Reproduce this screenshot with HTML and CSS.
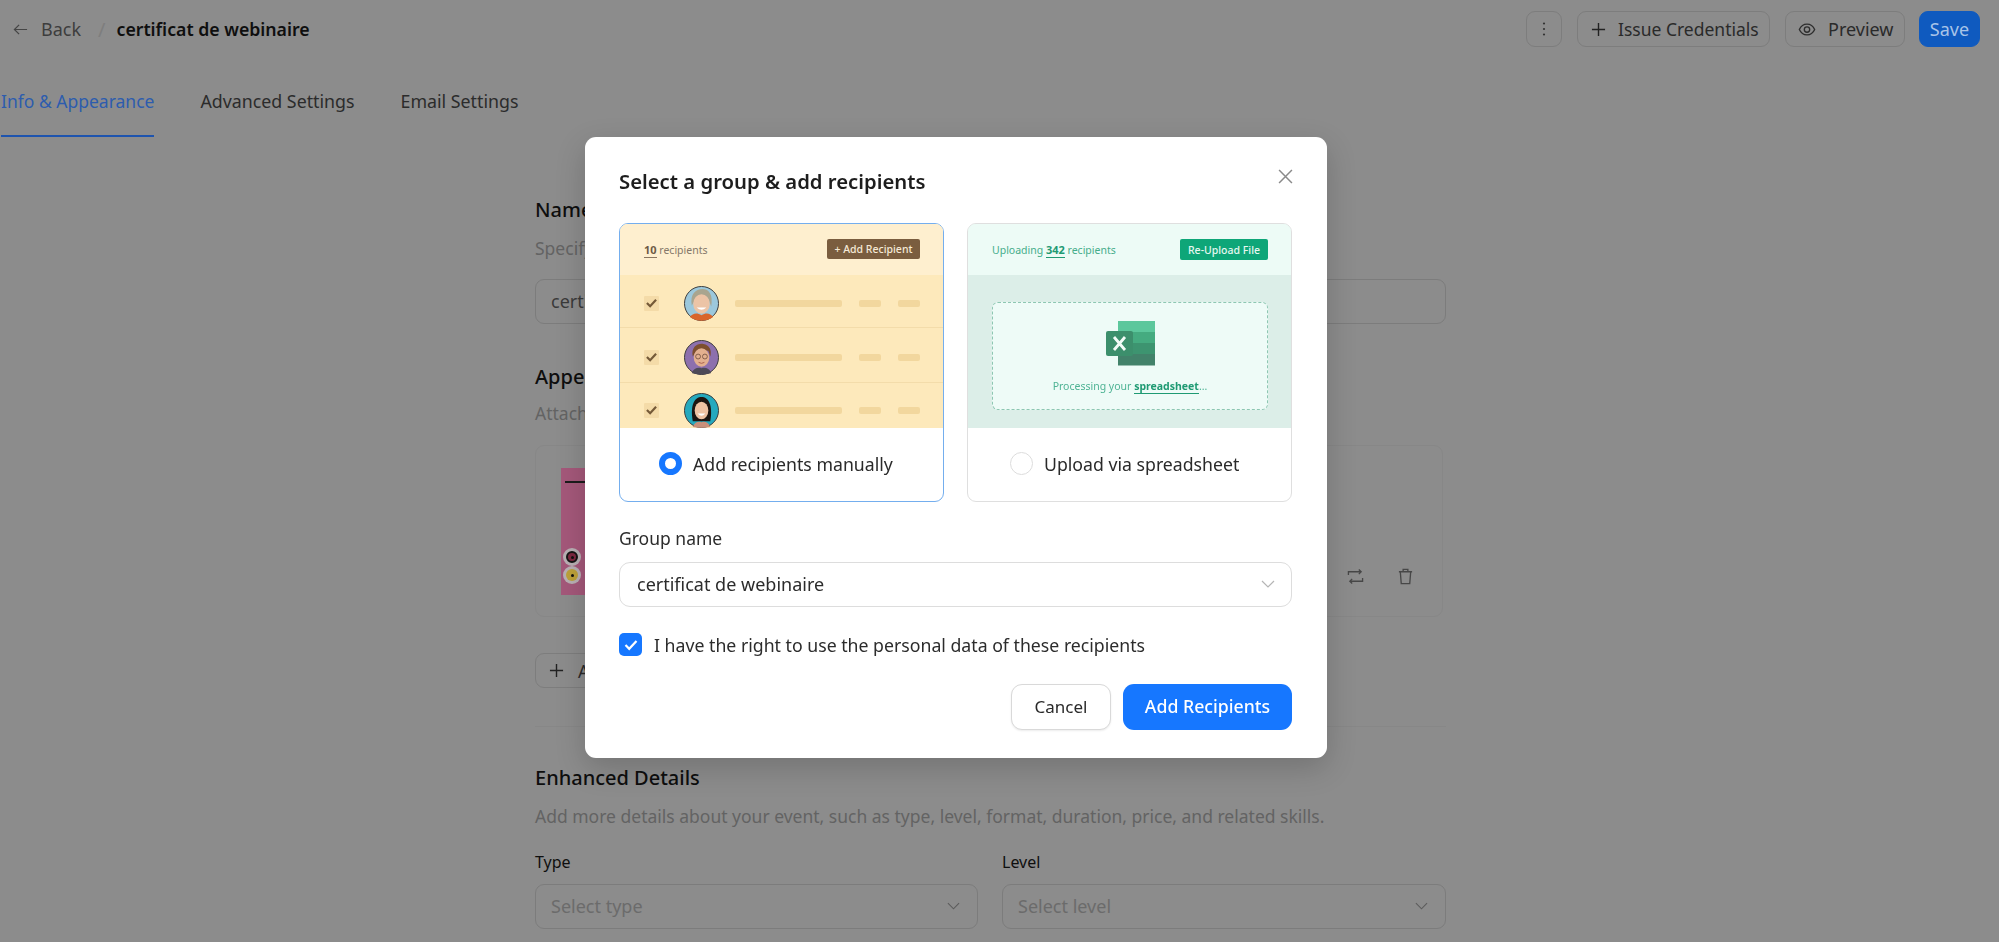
FILE: index.html
```html
<!DOCTYPE html>
<html lang="en">
<head>
<meta charset="utf-8">
<title>certificat de webinaire</title>
<link rel="stylesheet" href="styles.css">
</head>
<body>
<div class="page">
  <header class="topbar">
    <div class="crumbs">
      <svg class="ic-back" viewBox="0 0 16 16"><path d="M15 8H1.500M6.500 3 1.500 8 6.500 13"/></svg>
      <span class="back">Back</span>
      <span class="slash">/</span>
      <span class="doc-title">certificat de webinaire</span>
    </div>
    <div class="actions">
      <button class="btn btn-icon"><svg viewBox="0 0 16 16"><circle cx="8" cy="2.500" r="1.100"/><circle cx="8" cy="8" r="1.100"/><circle cx="8" cy="13.500" r="1.100"/></svg></button>
      <button class="btn btn-issue"><svg class="ic-plus" viewBox="0 0 16 16"><path d="M8 1v14M1 8h14"/></svg>Issue Credentials</button>
      <button class="btn btn-preview"><svg class="ic-eye" viewBox="0 0 20 16"><path d="M1.500 8C3.500 3.500 6.500 2 10 2S16.500 3.500 18.500 8C16.500 12.500 13.500 14 10 14S3.500 12.500 1.500 8Z"/><circle cx="10" cy="8" r="3"/></svg>Preview</button>
      <button class="btn btn-save">Save</button>
    </div>
  </header>
  <nav class="tabs">
    <span class="tab tab-on">Info &amp; Appearance</span>
    <span class="tab">Advanced Settings</span>
    <span class="tab">Email Settings</span>
  </nav>
  <main class="content">
    <h2 class="h">Name</h2>
    <p class="sub sub-a">Specify the name of your group</p>
    <div class="field field-name">certificat de webinaire</div>
    <h2 class="h h-appear">Appearance</h2>
    <p class="sub sub-b">Attach a design to your credentials</p>
    <div class="design">
      <div class="thumb">
        <span class="thumb-line"></span>
        <span class="seal seal-a"><i></i></span>
        <span class="seal seal-b"><i></i></span>
      </div>
      <div class="design-tools">
        <svg viewBox="0 0 18 18"><path d="M1.500 7.500V4H15M12.500 1.500 15 4 12.500 6.500M16.500 10.500V14H3M5.500 11.500 3 14 5.500 16.500"/></svg>
        <svg viewBox="0 0 18 18"><path d="M2 4H16M6.500 4V1.500H11.500V4M3.500 4 4.500 16.500H13.500L14.500 4"/></svg>
      </div>
    </div>
    <button class="btn btn-add"><svg class="ic-plus" viewBox="0 0 16 16"><path d="M8 1v14M1 8h14"/></svg>Add design</button>
    <hr class="rule">
    <h2 class="h h-enh">Enhanced Details</h2>
    <p class="sub sub-a">Add more details about your event, such as type, level, format, duration, price, and related skills.</p>
    <div class="grid2">
      <div>
        <label class="lbl">Type</label>
        <div class="field select">Select type<svg class="chev" viewBox="0 0 14 8"><path d="M1 1 7 7 13 1"/></svg></div>
      </div>
      <div>
        <label class="lbl">Level</label>
        <div class="field select">Select level<svg class="chev" viewBox="0 0 14 8"><path d="M1 1 7 7 13 1"/></svg></div>
      </div>
    </div>
  </main>
</div>

<section class="modal">
  <svg class="close" viewBox="0 0 14 14"><path d="M1 1 13 13M13 1 1 13"/></svg>
  <h1 class="m-title">Select a group &amp; add recipients</h1>
  <div class="cards">
    <article class="card card-on">
      <div class="art art-y">
        <div class="y-head">
          <span class="y-count"><b>10</b> recipients</span>
          <span class="y-btn">+ Add Recipient</span>
        </div>
        <div class="y-row y-row-1">
          <span class="y-check"><svg viewBox="0 0 12 10"><path d="M1 5 4.500 8.500 11 1.500"/></svg></span>
          <svg class="avatar" viewBox="0 0 36 36"><circle cx="18" cy="18" r="17.500" fill="#9cc8dc" stroke="#3a3a3a"/><path d="M8 20C6 8 12 3 19 3S30 9 28 21L25 13H12Z" fill="#a9a58f"/><ellipse cx="18" cy="18.500" rx="8.500" ry="10" fill="#ecc4a6"/><path d="M13 22Q18 27 23 22Z" fill="#fff"/><path d="M6 32C9 28 13 27 18 30 23 27 27 28 30 32 24 37 12 37 6 32Z" fill="#d9652b"/></svg>
          <span class="bar bar-l"></span><span class="bar bar-s"></span><span class="bar bar-s"></span>
        </div>
        <div class="y-row y-row-2">
          <span class="y-check"><svg viewBox="0 0 12 10"><path d="M1 5 4.500 8.500 11 1.500"/></svg></span>
          <svg class="avatar" viewBox="0 0 36 36"><circle cx="18" cy="18" r="17.500" fill="#8d70ad" stroke="#3a3a3a"/><path d="M9 17C7 7 14 3 20 4S29 10 27 17L25 11H13Z" fill="#7d4f2e"/><ellipse cx="18" cy="18" rx="8" ry="9.500" fill="#e3b08f"/><circle cx="14.500" cy="17" r="2.500" fill="none" stroke="#6a4a3a" stroke-width=".8"/><circle cx="21.500" cy="17" r="2.500" fill="none" stroke="#6a4a3a" stroke-width=".8"/><path d="M15 23Q18 25 21 23" fill="none" stroke="#a8614d"/><path d="M8 34C10 29 14 28 18 29 22 28 26 29 28 34 22 36 14 36 8 34Z" fill="#4d4a57"/></svg>
          <span class="bar bar-l"></span><span class="bar bar-s"></span><span class="bar bar-s"></span>
        </div>
        <div class="y-row y-row-3">
          <span class="y-check"><svg viewBox="0 0 12 10"><path d="M1 5 4.500 8.500 11 1.500"/></svg></span>
          <svg class="avatar" viewBox="0 0 36 36"><circle cx="18" cy="18" r="17.500" fill="#25a9be" stroke="#3a3a3a"/><path d="M9 29C6 12 11 4 18 4S30 12 27 29Z" fill="#1c1512"/><ellipse cx="18" cy="18" rx="7" ry="9" fill="#eec2a3"/><path d="M14 21Q18 26 22 21Z" fill="#fff"/><path d="M9 35C11 30 14 29 18 30 22 29 25 30 27 35 22 36 14 36 9 35Z" fill="#c98f7a"/></svg>
          <span class="bar bar-l"></span><span class="bar bar-s"></span><span class="bar bar-s"></span>
        </div>
      </div>
      <div class="choice choice-y"><span class="radio radio-on"></span><span>Add recipients manually</span></div>
    </article>
    <article class="card">
      <div class="art art-g">
        <div class="g-head">
          <span class="g-count">Uploading <b>342</b> recipients</span>
          <span class="g-btn">Re-Upload File</span>
        </div>
        <div class="g-body">
          <div class="drop">
            <svg class="excel" viewBox="0 0 49 46">
              <rect x="12" y="1" width="37" height="11.500" fill="#5cc79c"/>
              <rect x="12" y="12" width="37" height="11.500" fill="#45ab80"/>
              <rect x="12" y="23" width="37" height="11.500" fill="#3d9470"/>
              <rect x="12" y="34" width="37" height="11.500" fill="#42826a"/>
              <rect x="0" y="11" width="27" height="25" rx="2" fill="#3c8f6c"/>
              <path d="M8 17 19 30M19 17 8 30" stroke="#f2fbf7" stroke-width="2.800"/>
            </svg>
            <span class="drop-text">Processing your <b>spreadsheet</b>...</span>
          </div>
        </div>
      </div>
      <div class="choice choice-g"><span class="radio"></span><span>Upload via spreadsheet</span></div>
    </article>
  </div>
  <label class="m-lbl">Group name</label>
  <div class="m-select">certificat de webinaire<svg class="m-chev" viewBox="0 0 14 8"><path d="M1 1 7 7 13 1"/></svg></div>
  <div class="consent">
    <span class="cb"><svg viewBox="0 0 14 12"><path d="M1.500 6 5.200 9.800 12.500 2"/></svg></span>
    <span>I have the right to use the personal data of these recipients</span>
  </div>
  <div class="m-foot">
    <button class="m-btn m-cancel">Cancel</button>
    <button class="m-btn m-ok">Add Recipients</button>
  </div>
</section>
</body>
</html>
```
FILE: styles.css
```css
* { box-sizing: border-box; }
html, body { margin: 0; height: 942px; overflow: hidden; }
body { background: #8c8c8c; font-family: "Noto Sans", sans-serif; color: #262626; font-size: 17.800px; }
.page { height: 942px; overflow: hidden; }
button { font: inherit; }

.topbar { display: flex; justify-content: space-between; padding: 11px 19px 0 13px; height: 58px; }
.crumbs { display: flex; align-items: center; height: 36px; }
.ic-back { width: 15px; height: 15px; fill: none; stroke: #454545; stroke-width: 1.300; margin-right: 13px; }
.back { color: #3d3d3d; font-size: 18px; }
.slash { color: #7e7e7e; font-size: 20px; margin: 0 11px 0 17px; }
.doc-title { color: #0f0f0f; font-size: 17.700px; font-weight: 600; }
.actions { display: flex; gap: 15px; }
.btn { display: inline-flex; align-items: center; height: 36px; background: transparent; border: 1.500px solid #7d7d7d; border-radius: 9px; color: #2a2a2a; font-size: 17.500px; padding: 0; }
.btn-icon { width: 36px; justify-content: center; }
.btn-icon svg { width: 16px; height: 16px; fill: #333; }
.btn-issue { width: 193px; padding-left: 13px; }
.btn-issue .ic-plus { margin-right: 12px; }
.btn-preview { width: 120px; padding-left: 12px; font-size: 18px; }
.btn-save { width: 61px; justify-content: center; background: #0f5abf; border-color: #0f5abf; color: #a8c4e8; margin-left: -1px; font-size: 18px; }
.ic-plus { width: 15px; height: 15px; fill: none; stroke: #222; stroke-width: 1.500; margin-right: 14px; }
.ic-eye { width: 18px; height: 15px; fill: none; stroke: #2e2e2e; stroke-width: 1.500; margin-right: 12px; }

.tabs { display: flex; gap: 46px; margin-top: 31px; padding-left: 1px; }
.tab { font-size: 17.800px; line-height: 24px; padding-bottom: 22px; color: #2b2b2b; border-bottom: 2px solid transparent; height: 48px; }
.tab-on { color: #2d5cae; border-bottom-color: #1e54ae; font-size: 17.500px; }

.content { margin: 59px 0 0 535px; width: 911px; }
.h { margin: 0; font-size: 20px; line-height: 28px; font-weight: 500; color: #0e0e0e; }
.sub { margin: 0; font-size: 17.500px; line-height: 24px; color: #636363; }
.sub-a { margin-top: 12px; }
.sub-b { margin-top: 10px; }
.field { height: 45px; border: 1.500px solid #7c7c7c; border-radius: 9px; display: flex; align-items: center; padding: 0 15px 2px; color: #3a3a3a; font-size: 18px; }
.field-name { margin-top: 19px; }
.h-appear { margin-top: 39px; }
.design { margin-top: 20px; height: 172px; width: 908px; border: 1px solid #878787; border-radius: 9px; padding: 22px 0 0 25px; display: flex; justify-content: space-between; }
.thumb { position: relative; width: 110px; height: 127px; background: #a4587a; }
.thumb-line { position: absolute; left: 4px; top: 13px; width: 60px; height: 2px; background: #1c1c1c; }
.seal { position: absolute; left: 5px; width: 12px; height: 12px; border-radius: 50%; display: flex; align-items: center; justify-content: center; box-shadow: 0 0 0 3px #b9b0b4; }
.seal i { width: 3px; height: 3px; background: #111; border-radius: 50%; }
.seal-a { top: 83px; background: #7c2840; border: 2px solid #151515; }
.seal-b { top: 101px; background: #bda13a; }
.design-tools { display: flex; gap: 33px; align-items: flex-end; padding: 0 28px 31px 0; }
.design-tools svg { width: 17px; height: 17px; fill: none; stroke: #474747; stroke-width: 1.400; }
.btn-add { margin-top: 36px; width: 150px; height: 35px; padding-left: 13px; }
.rule { margin: 38px 0 0; border: 0; border-top: 1px solid #878787; }
.h-enh { margin-top: 37px; }
.grid2 { display: grid; grid-template-columns: 443px 444px; gap: 24px; margin-top: 23px; }
.lbl { display: block; font-size: 16px; line-height: 22px; color: #0f0f0f; margin-bottom: 11px; }
.select { justify-content: space-between; color: #6b6b6b; }
.chev { width: 13px; height: 8px; fill: none; stroke: #5c5c5c; stroke-width: 1.200; margin-right: 2px; }

.modal { position: fixed; left: 585px; top: 137px; width: 742px; height: 621px; background: #fff; border-radius: 11px; padding: 30px 35px 28px 34px; box-shadow: 0 10px 30px rgba(0,0,0,.18); }
.close { position: absolute; left: 693px; top: 32px; width: 15px; height: 15px; fill: none; stroke: #8a8a8a; stroke-width: 1.400; }
.m-title { margin: 0; font-size: 20.300px; line-height: 28px; font-weight: 600; color: #1d1d1d; }
.cards { display: flex; gap: 23px; margin-top: 28px; }
.card { width: 325px; height: 279px; border: 1.500px solid #dfdfdf; border-radius: 9px; overflow: hidden; display: flex; flex-direction: column; }
.card-on { border-color: #74aeee; }
.art { height: 204px; flex: none; display: flex; flex-direction: column; }
.art-y { background: #fde9bb; }
.y-head { height: 50.500px; flex: none; background: #feefcf; display: flex; align-items: center; justify-content: space-between; padding: 0 23px 0 24px; }
.y-count { font-size: 10.500px; color: #85786a; }
.y-count b { color: #6d5a45; font-weight: 700; font-size: 11px; border-bottom: 1px solid #8a7660; }
.y-btn { width: 93px; height: 20px; background: #7a5d3f; color: #f5e9d6; font-size: 10.500px; font-weight: 500; border-radius: 2px; display: flex; align-items: center; justify-content: center; }
.y-row { display: flex; align-items: flex-start; padding-left: 24px; border-bottom: 1px solid #f3dcaa; flex: none; }
.y-row-1 { height: 53px; padding-top: 11px; }
.y-row-2 { height: 55px; padding-top: 12px; }
.y-row-3 { height: 45px; padding-top: 10px; border-bottom: 0; }
.y-check { width: 15px; height: 15px; margin-top: 10px; background: #f4dba8; border-radius: 1px; display: flex; align-items: center; justify-content: center; margin-right: 25px; flex: none; }
.y-check svg { width: 11px; height: 10px; fill: none; stroke: #755a38; stroke-width: 2.400; }
.avatar { width: 35px; height: 35px; margin-right: 16px; flex: none; }
.bar { height: 7px; margin-top: 14px; border-radius: 2px; background: #f2d79e; margin-right: 17px; }
.bar-l { width: 107px; }
.bar-s { width: 22px; }
.art-g { background: #dceee8; }
.g-head { height: 51px; flex: none; background: #edfbf6; display: flex; align-items: center; justify-content: space-between; padding: 0 23px 0 24px; }
.g-count { font-size: 10.500px; color: #45ad8b; }
.g-count b { font-weight: 700; font-size: 11px; color: #1f9a73; border-bottom: 1px solid #1f9a73; }
.g-btn { width: 88px; height: 21px; background: #0ea678; color: #e6f8f1; font-size: 10.500px; font-weight: 500; border-radius: 2px; display: flex; align-items: center; justify-content: center; }
.g-body { flex: 1; padding: 27px 24px 0; }
.drop { height: 108px; width: 276px; background: #eefbf7; border: 1px dashed #8dc7b2; border-radius: 6px; display: flex; flex-direction: column; align-items: center; padding-top: 17px; }
.excel { width: 49px; height: 46px; flex: none; }
.drop-text { margin-top: 13px; font-size: 10.500px; color: #4eb394; }
.drop-text b { color: #1f9a73; font-weight: 700; border-bottom: 1px solid #1f9a73; }
.choice { flex: 1; display: flex; align-items: center; font-size: 17.700px; color: #2a2a2a; padding-bottom: 2px; }
.choice-y { padding-left: 39px; gap: 11px; }
.choice-g { padding-left: 42px; gap: 11px; }
.radio { width: 23px; height: 23px; border-radius: 50%; border: 1.500px solid #dcdcdc; flex: none; }
.radio-on { border: 6.500px solid #1677ff; }
.m-lbl { display: block; margin-top: 25px; margin-bottom: 13px; font-size: 17.500px; line-height: 22px; color: #2c2c2c; }
.m-select { height: 45px; border: 1.500px solid #dddddd; border-radius: 11px; display: flex; align-items: center; justify-content: space-between; padding: 0 17px 2px; font-size: 18px; color: #2b2b2b; }
.m-chev { width: 14px; height: 8px; fill: none; stroke: #b5b5b5; stroke-width: 1.200; margin-right: -1px; }
.consent { margin-top: 26px; display: flex; align-items: center; gap: 12px; height: 23px; font-size: 17.700px; color: #2c2c2c; }
.cb { width: 23px; height: 23px; background: #1677ff; border-radius: 5px; display: flex; align-items: center; justify-content: center; flex: none; }
.cb svg { width: 14px; height: 12px; fill: none; stroke: #fff; stroke-width: 2.200; }
.m-foot { display: flex; justify-content: flex-end; gap: 12px; margin-top: 28px; }
.m-btn { height: 46px; border-radius: 11px; font-size: 17.700px; font-weight: 500; padding: 0 0 2px; }
.m-cancel { width: 100px; background: #fff; border: 1.500px solid #d9d9d9; color: #2a2a2a; box-shadow: 0 1px 2px rgba(0,0,0,.08); font-weight: 400; font-size: 17px; }
.m-ok { width: 169px; background: #1677ff; border: 0; color: #fff; }
```
